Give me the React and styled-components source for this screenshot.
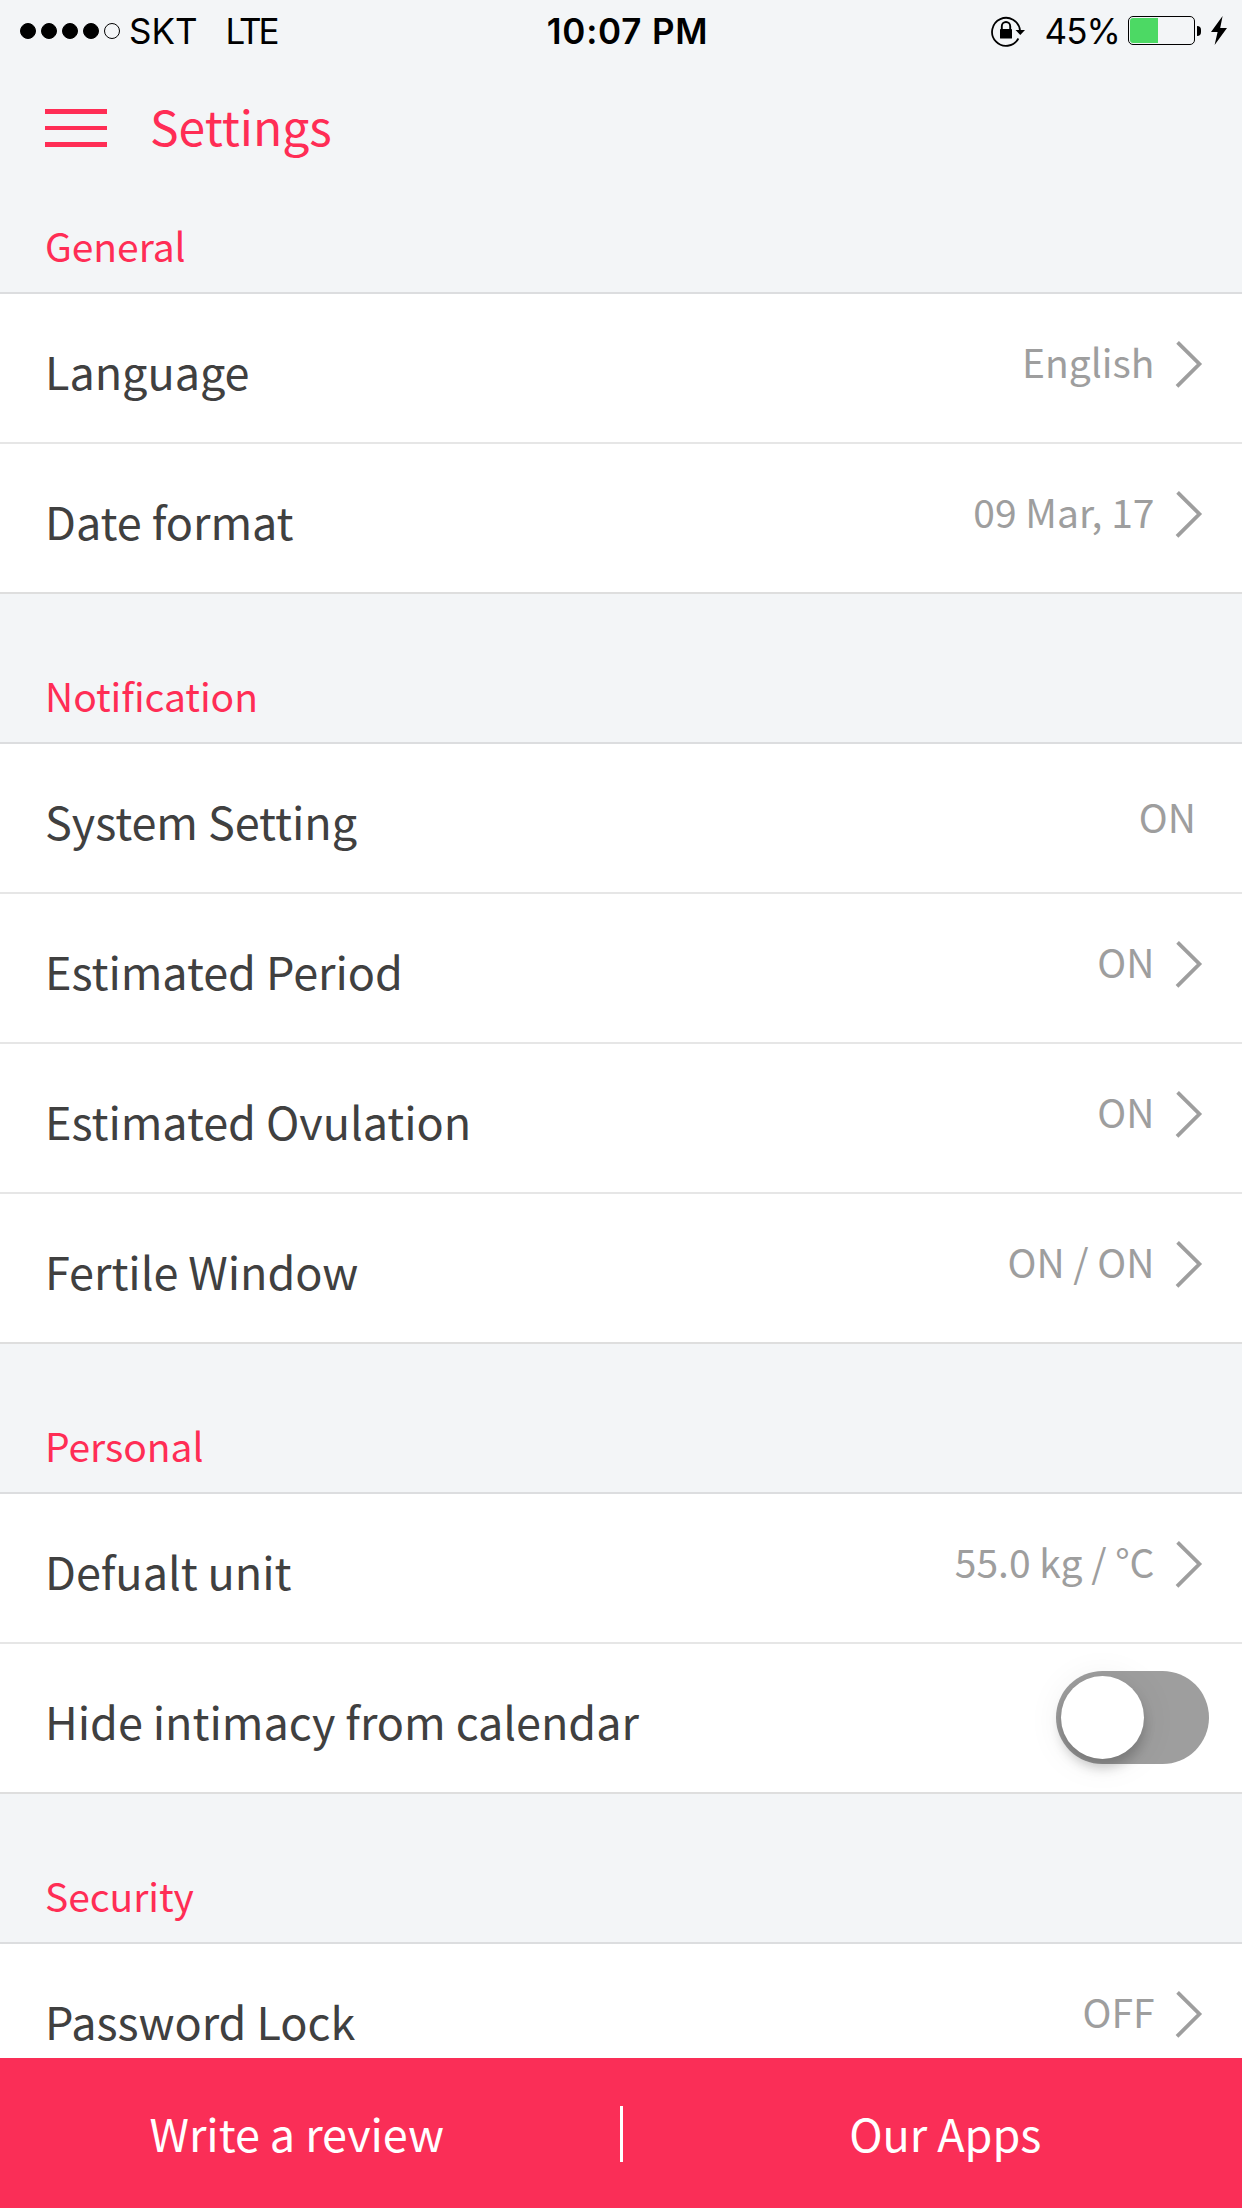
import { useState } from 'react';
import styled, { createGlobalStyle } from 'styled-components';

const sections = [
    {
        title: 'General',
        rows: [
            { label: 'Language', value: 'English', arrow: true },
            { label: 'Date format', value: '09 Mar, 17', arrow: true },
        ],
    },
    {
        title: 'Notification',
        rows: [
            { label: 'System Setting', value: 'ON' },
            { label: 'Estimated Period', value: 'ON', arrow: true },
            { label: 'Estimated Ovulation', value: 'ON', arrow: true },
            { label: 'Fertile Window', value: 'ON / ON', arrow: true },
        ],
    },
    {
        title: 'Personal',
        rows: [
            { label: 'Defualt unit', value: '55.0 kg / °C', arrow: true },
            { label: 'Hide intimacy from calendar', toggle: true },
        ],
    },
    {
        title: 'Security',
        rows: [{ label: 'Password Lock', value: 'OFF', arrow: true }],
    },
];

const StatusBar = () => (
    <StatusBarStyle>
        <StatusLeft>
            <SignalDots>
                <Dot $filled />
                <Dot $filled />
                <Dot $filled />
                <Dot $filled />
                <Dot />
            </SignalDots>
            <Carrier>SKT</Carrier>
            <Network>LTE</Network>
        </StatusLeft>
        <Clock>10:07 PM</Clock>
        <StatusRight>
            <svg width="36" height="32" viewBox="0 0 36 32">
                <path d="M27.4 23.5A14 14 0 1 1 29 15.5" fill="none" stroke="#000" strokeWidth="1.8" />
                <path d="M24.5 15h9.5l-4.7 5z" />
                <path d="M10.8 14v-2.8a4.2 4.2 0 0 1 8.4 0V14" fill="none" stroke="#000" strokeWidth="1.9" />
                <rect x="9" y="14" width="12" height="9.6" rx="0.6" />
            </svg>
            <Percent>45%</Percent>
            <Battery>
                <BatteryLevel />
            </Battery>
            <BatteryTip />
            <svg width="16" height="29" viewBox="0 0 16 29">
                <path d="M11.6 0L0 16h6.6L3.6 29 16 12H9.2z" />
            </svg>
        </StatusRight>
    </StatusBarStyle>
);

const SettingRow = ({ row }) => {
    const [on, setOn] = useState(false);

    return (
        <Row>
            <Label>{row.label}</Label>
            {row.value && <Value $plain={!row.arrow}>{row.value}</Value>}
            {row.arrow && (
                <Chevron width="28" height="48" viewBox="0 0 28 48">
                    <path d="M2.6 2.4L24.4 24 2 46.4" fill="none" stroke="#9e9e9e" strokeWidth="3.8" />
                </Chevron>
            )}
            {row.toggle && (
                <Toggle role="switch" aria-checked={on} $on={on} onClick={() => setOn(!on)}>
                    <Knob />
                </Toggle>
            )}
        </Row>
    );
};

const App = () => (
    <Screen>
        <GlobalStyle />
        <StatusBar />
        <Header>
            <MenuButton aria-label="Menu">
                <MenuLine />
                <MenuLine />
                <MenuLine />
            </MenuButton>
            <Title>Settings</Title>
        </Header>
        <List>
            {sections.map((section) => (
                <section key={section.title}>
                    <SectionTitle>{section.title}</SectionTitle>
                    {section.rows.map((row) => (
                        <SettingRow key={row.label} row={row} />
                    ))}
                </section>
            ))}
        </List>
        <Footer>
            <FooterButton>Write a review</FooterButton>
            <Divider />
            <FooterButton>Our Apps</FooterButton>
        </Footer>
    </Screen>
);

export default App;

const GlobalStyle = createGlobalStyle`
    * {
        box-sizing: border-box;
    }

    body {
        margin: 0;
        background: #f3f5f7;
        font-family: "Noto Sans CJK KR", "Noto Sans", sans-serif;
    }

    button {
        border: 0;
        padding: 0;
        background: none;
        font: inherit;
    }
`;

const Screen = styled.div`
    display: flex;
    flex-direction: column;
    width: 1242px;
    height: 2208px;
    overflow: hidden;
    background: #f3f5f7;
`;

const StatusBarStyle = styled.div`
    display: grid;
    grid-template-columns: 1fr auto 1fr;
    align-items: center;
    flex: none;
    height: 60px;
    padding: 0 15px 0 20px;
    font-family: Inter, "Liberation Sans", sans-serif;
    font-size: 35px;
    line-height: 60px;
    color: #000;
`;

const StatusLeft = styled.div`
    display: flex;
    align-items: center;
`;

const SignalDots = styled.div`
    display: flex;
    gap: 5px;
    margin-right: 9px;
`;

const Dot = styled.span`
    width: 16px;
    height: 16px;
    border: 1px solid #000;
    border-radius: 50%;
    background: ${(props) => (props.$filled ? '#000' : 'transparent')};
`;

const Carrier = styled.span`
    padding-top: 1px;
`;

const Network = styled.span`
    padding-top: 1px;
    margin-left: 28px;
    letter-spacing: -3px;
`;

const Clock = styled.div`
    padding: 1px 0 0 8px;
    font-weight: 600;
    letter-spacing: 0.8px;
`;

const StatusRight = styled.div`
    display: flex;
    align-items: center;
    justify-content: flex-end;
`;

const Percent = styled.span`
    margin: 0 8px 0 17px;
    padding-top: 1px;
    letter-spacing: -0.9px;
`;

const Battery = styled.div`
    width: 67px;
    height: 29px;
    padding: 1px;
    border: 1px solid #000;
    border-radius: 5px;
`;

const BatteryLevel = styled.div`
    width: 28px;
    height: 100%;
    border-radius: 3px 0 0 3px;
    background: #4cd964;
`;

const BatteryTip = styled.div`
    width: 4px;
    height: 10px;
    margin: 0 10px 0 2px;
    border-radius: 0 4px 4px 0;
    background: #000;
`;

const Header = styled.header`
    display: flex;
    align-items: flex-start;
    flex: none;
    height: 84px;
    padding: 0 45px;
`;

const MenuButton = styled.button`
    display: flex;
    flex-direction: column;
    gap: 12px;
    width: 62px;
    margin: 49px 43px 0 0;
`;

const MenuLine = styled.span`
    width: 100%;
    height: 4.5px;
    background: #ff2d55;
`;

const Title = styled.h1`
    margin: 25px 0 0;
    font-size: 48px;
    font-weight: 400;
    line-height: 80px;
    color: #ff2d55;
`;

const List = styled.main`
    flex: 1;
    min-height: 0;
    overflow: hidden;
`;

const SectionTitle = styled.h2`
    height: 150px;
    margin: 0;
    padding: 52px 45px 0;
    border-bottom: 2px solid #dcdddf;
    font-size: 39px;
    font-weight: 400;
    line-height: 98px;
    letter-spacing: -0.06px;
    color: #ff2d55;
`;

const Row = styled.div`
    display: flex;
    height: 150px;
    padding: 0 33px 0 45px;
    border-bottom: 2px solid #e6e6e6;
    background: #fff;

    &:last-child {
        border-bottom-color: #dedede;
    }
`;

const Label = styled.span`
    flex: 1;
    padding-top: 3px;
    font-size: 45px;
    line-height: 147px;
    letter-spacing: -0.05px;
    color: #404040;
`;

const Value = styled.span`
    margin-right: ${(props) => (props.$plain ? '13px' : '20.5px')};
    font-size: 39px;
    line-height: ${(props) => (props.$plain ? '144px' : '134px')};
    color: #9e9e9e;
`;

const Chevron = styled.svg`
    margin: 46px 6px 0 0;
`;

const Toggle = styled.button`
    display: flex;
    justify-content: ${(props) => (props.$on ? 'flex-end' : 'flex-start')};
    width: 153px;
    height: 93px;
    margin-top: 27px;
    padding: 5px 4.5px;
    border-radius: 47px;
    background: ${(props) => (props.$on ? '#ff2d55' : '#9e9e9e')};
`;

const Knob = styled.span`
    width: 83px;
    height: 83px;
    border-radius: 50%;
    background: #fff;
    box-shadow: 0 9px 12px rgba(0, 0, 0, 0.2), 0 3px 36px rgba(0, 0, 0, 0.08);
`;

const Footer = styled.footer`
    display: flex;
    align-items: center;
    flex: none;
    height: 150px;
    background: #fa2e57;
`;

const FooterButton = styled.button`
    flex: 1;
    font-size: 45px;
    line-height: 150px;
    letter-spacing: -0.05px;
    color: #fff;
`;

const Divider = styled.div`
    width: 3px;
    height: 56px;
    margin: 2px 26px 0;
    background: #fff;
`;
